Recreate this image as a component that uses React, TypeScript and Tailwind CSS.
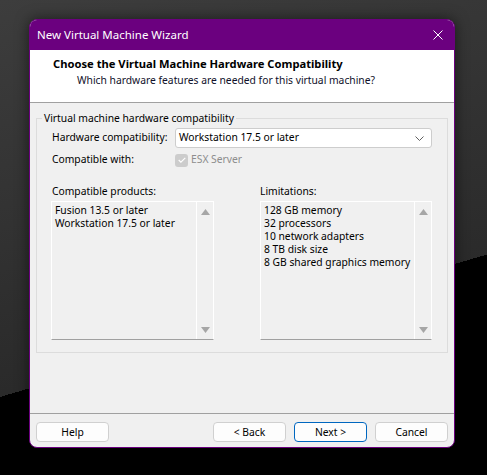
const font = { fontFamily: '"Segoe UI", "Noto Sans", sans-serif' };

const compatibleProducts = ["Fusion 13.5 or later", "Workstation 17.5 or later"];

const limitations = [
  "128 GB memory",
  "32 processors",
  "10 network adapters",
  "8 TB disk size",
  "8 GB shared graphics memory",
];

function ScrollArrow({ down }: { down?: boolean }) {
  return (
    <svg width="9" height="6" viewBox="0 0 9 6" className="block">
      <path d={down ? "M0 0h9L4.5 6z" : "M0 6h9L4.5 0z"} fill="#a6a6a6" />
    </svg>
  );
}

function ListBox({ items, width }: { items: string[]; width: string }) {
  return (
    <div className={`${width} h-[139px] flex border border-white border-b-[#a0a0a0] bg-[#f0f0f0]`}>
      <div className="flex-1 pl-[3px] pt-[2px] text-black">
        {items.map((item) => (
          <div key={item} className="h-[13px] leading-[13px] whitespace-nowrap">
            {item}
          </div>
        ))}
      </div>
      <div className="w-[17px] border-l border-white flex flex-col items-center justify-between pt-[7px] pb-[6px]">
        <ScrollArrow />
        <ScrollArrow down />
      </div>
    </div>
  );
}

function Button({ label, primary }: { label: string; primary?: boolean }) {
  return (
    <button
      className={`w-[73px] h-[20px] rounded-[4px] border bg-[#fdfdfd] text-black leading-none ${
        primary ? "border-[#0067c0]" : "border-[#d0d0d0]"
      }`}
    >
      {label}
    </button>
  );
}

export default function App() {
  return (
    <div
      className="w-[487px] h-[475px] pt-[19px] pl-[29px] text-[10.3px] bg-[linear-gradient(163.7deg,transparent_381px,#000_381px),linear-gradient(165deg,#3d3d3d,#2a2a2a_65%)]"
      style={font}
    >
      <div className="w-[426px] h-[429px] rounded-[8px] border border-[#6b007f] overflow-hidden flex flex-col bg-[#f0f0f0] shadow-[0_0_14px_rgba(0,0,0,0.55)]">
        {/* title bar */}
        <div className="h-[30px] bg-[#6b007f] flex items-center justify-between pl-[7px] pr-[11px] text-white text-[11.5px]">
          <span>New Virtual Machine Wizard</span>
          <svg width="10" height="10" viewBox="0 0 10 10">
            <path d="M0.5 0.5l9 9M9.5 0.5l-9 9" stroke="#fff" strokeWidth="1" />
          </svg>
        </div>

        {/* page header */}
        <div className="h-[53px] bg-white border-b border-[#a0a0a0] pt-[6px] leading-[16px]">
          <div className="pl-[23px] font-bold text-[11.2px] text-black">
            Choose the Virtual Machine Hardware Compatibility
          </div>
          <div className="pl-[47px] text-[#10102a]">Which hardware features are needed for this virtual machine?</div>
        </div>

        {/* page body */}
        <div className="h-[310px] px-[6px] pt-[7px]">
          <fieldset className="border border-[#dcdcdc] pb-[12px] text-black">
            <legend className="ml-[5px] px-[2px] leading-[16px]">Virtual machine hardware compatibility</legend>

            <div className="pl-[14px]">
              <div className="flex items-center h-[20px] mt-[2px] pl-[1px]">
                <span className="w-[123px] shrink-0 whitespace-nowrap">Hardware compatibility:</span>
                <div className="w-[257px] h-[20px] bg-white border border-[#cdcdcd] rounded-[3px] flex items-center justify-between pl-[3px] pr-[7px]">
                  <span>Workstation 17.5 or later</span>
                  <svg width="9" height="5" viewBox="0 0 9 5">
                    <path d="M0.5 0.5l4 4 4-4" fill="none" stroke="#606060" strokeWidth="1" />
                  </svg>
                </div>
              </div>

              <div className="flex items-center h-[16px] mt-[4px] pl-[1px]">
                <span className="w-[123px] shrink-0 whitespace-nowrap">Compatible with:</span>
                <span className="w-[13px] h-[13px] rounded-[3px] bg-[#cccccc] flex items-center justify-center">
                  <svg width="8" height="6" viewBox="0 0 8 6">
                    <path d="M0.7 3l2.2 2.2L7.3 0.8" fill="none" stroke="#fff" strokeWidth="1.1" />
                  </svg>
                </span>
                <span className="ml-[3px] text-[#8d8d8d]">ESX Server</span>
              </div>

              <div className="flex mt-[15px]">
                <div>
                  <div className="pl-[1px] h-[16px] leading-[16px] mb-[2px]">Compatible products:</div>
                  <ListBox items={compatibleProducts} width="w-[163px]" />
                </div>
                <div className="ml-[46px]">
                  <div className="h-[16px] leading-[16px] mb-[2px]">Limitations:</div>
                  <ListBox items={limitations} width="w-[172px]" />
                </div>
              </div>
            </div>
          </fieldset>
        </div>

        {/* wizard buttons */}
        <div className="flex-1 border-t border-[#a0a0a0] flex items-start pt-[8px] px-[6px]">
          <Button label="Help" />
          <div className="ml-auto flex gap-[8px]">
            <Button label="< Back" />
            <Button label="Next >" primary />
            <Button label="Cancel" />
          </div>
        </div>
      </div>
    </div>
  );
}
